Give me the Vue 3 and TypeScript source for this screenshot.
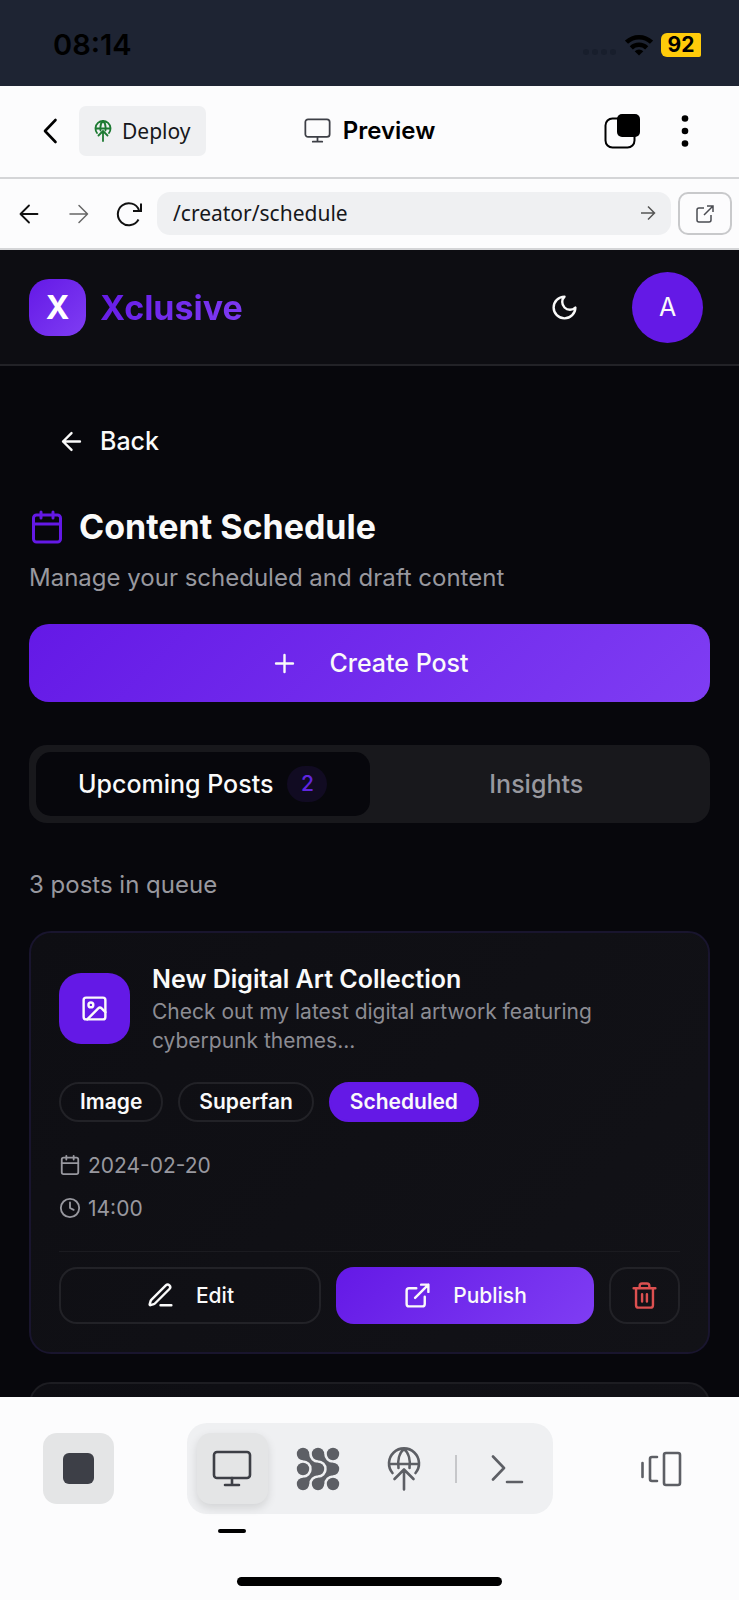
<script setup lang="ts">
import { ref } from 'vue'

interface Post {
  title: string
  description: string
  tags: string[]
  status: string
  date: string
  time: string
}

const path = ref('/creator/schedule')
const activeTab = ref<'upcoming' | 'insights'>('upcoming')
const post: Post = {
  title: 'New Digital Art Collection',
  description: 'Check out my latest digital artwork featuring cyberpunk themes...',
  tags: ['Image', 'Superfan'],
  status: 'Scheduled',
  date: '2024-02-20',
  time: '14:00',
}
</script>

<template>
  <div class="screen">
    <div class="status">
      <span class="clock">08:14</span>
      <div class="indicators">
        <svg class="signal" width="34" height="8" viewBox="0 0 34 8"><circle cx="3" cy="4" r="3" /><circle cx="12" cy="4" r="3" /><circle cx="21" cy="4" r="3" /><circle cx="30" cy="4" r="3" /></svg>
        <svg width="28" height="22" viewBox="0 0 28 22" fill="none" stroke="#000" stroke-width="4.500"><path d="M1.500 8.200a18 18 0 0 1 25 0" /><path d="M6.300 13.800a11.200 11.200 0 0 1 15.400 0" /><path d="M14 21.600l-4.300-4.400a6.300 6.300 0 0 1 8.600 0z" fill="#000" stroke="none" /></svg>
        <span class="battery">92</span>
      </div>
    </div>

    <header class="topbar">
      <div class="top-left">
        <button class="plain chevron" aria-label="Go back">
          <svg width="16" height="26" viewBox="0 0 16 26" fill="none" stroke="#000" stroke-width="2.600" stroke-linecap="round" stroke-linejoin="round"><path d="M13.500 2L3 13l10.500 11" /></svg>
        </button>
        <button class="deploy">
          <svg width="18" height="22" viewBox="0 0 34 44" fill="none" stroke="#1d7a32" stroke-width="3.600" stroke-linecap="round" stroke-linejoin="round"><path d="M5 26A15 15 0 1 1 29 26M2 17h30M17 2c-5 4-6 11-5 19M17 2c5 4 6 11 5 19M17 42V23M8 31l9-9 9 9" /></svg>
          Deploy
        </button>
      </div>
      <div class="top-title">
        <svg width="27" height="25" viewBox="0 0 40 37" fill="none" stroke="#3d3f46" stroke-width="2.600" stroke-linecap="round" stroke-linejoin="round"><rect x="2" y="2" width="36" height="26" rx="4" /><path d="M20 28v7M13 35h14" /></svg>
        Preview
      </div>
      <div class="top-right">
        <button class="plain" aria-label="Windows">
          <svg width="36" height="36" viewBox="0 0 36 36"><rect x="1.500" y="5.500" width="29" height="29" rx="7" fill="none" stroke="#000" stroke-width="2" /><rect x="13" y="1" width="23" height="23" rx="5" /></svg>
        </button>
        <button class="plain dots" aria-label="More">
          <svg width="8" height="34" viewBox="0 0 8 34"><circle cx="4" cy="4.500" r="3.300" /><circle cx="4" cy="17" r="3.300" /><circle cx="4" cy="29.500" r="3.300" /></svg>
        </button>
      </div>
    </header>

    <div class="address">
      <button class="plain nav" aria-label="Previous page">
        <svg width="20" height="20" viewBox="0 0 20 20" fill="none" stroke="#111" stroke-width="1.800" stroke-linecap="round" stroke-linejoin="round"><path d="M18.500 10H1.500M10 1.500L1.500 10l8.500 8.500" /></svg>
      </button>
      <button class="plain nav" aria-label="Next page">
        <svg width="20" height="20" viewBox="0 0 20 20" fill="none" stroke="#666" stroke-width="1.500" stroke-linecap="round" stroke-linejoin="round"><path d="M1 10h17.500M10 1.500l8.500 8.500-8.500 8.500" /></svg>
      </button>
      <button class="plain nav" aria-label="Reload">
        <svg width="28" height="26" viewBox="0 0 28 26" fill="none" stroke="#111" stroke-width="2"><path d="M23.500 18.500A11 11 0 1 1 24 9M26 2.500V10h-8" /></svg>
      </button>
      <div class="url">
        <input v-model="path" type="text" aria-label="Page path" />
        <button class="plain" aria-label="Go">
          <svg width="16" height="16" viewBox="0 0 16 16" fill="none" stroke="#555" stroke-width="1.500"><path d="M1 8h13M8 1.500L14.500 8 8 14.500" /></svg>
        </button>
      </div>
      <button class="external" aria-label="Open in new tab">
        <svg width="20" height="20" viewBox="0 0 20 20" fill="none" stroke="#4a4c52" stroke-width="1.500"><path d="M9 4H4Q2 4 2 6v10q0 2 2 2h10q2 0 2-2v-5M12 2h6v6M18 2L9 11" /></svg>
      </button>
    </div>

    <main class="app">
      <div class="app-header">
        <span class="logo">X</span>
        <span class="brand">Xclusive</span>
        <button class="plain moon" aria-label="Toggle theme">
          <svg class="icon" viewBox="0 0 24 24"><path d="M12 3a6 6 0 0 0 9 9 9 9 0 1 1-9-9Z" /></svg>
        </button>
        <button class="avatar" aria-label="Account">A</button>
      </div>

      <div class="content">
        <a href="#" class="back">
          <svg class="icon" viewBox="0 0 24 24"><path d="M12 19l-7-7 7-7M19 12H5" /></svg>
          Back
        </a>

        <h1>
          <svg class="icon icon-lg" viewBox="0 0 24 24"><rect x="3" y="4" width="18" height="18" rx="2" /><path d="M8 2v4M16 2v4M3 10h18" /></svg>
          Content Schedule
        </h1>
        <p class="subtitle">Manage your scheduled and draft content</p>

        <button class="create">
          <svg class="icon" viewBox="0 0 24 24"><path d="M5 12h14M12 5v14" /></svg>
          Create Post
        </button>

        <div class="tabs" role="tablist">
          <button role="tab" class="tab" :class="{ active: activeTab === 'upcoming' }" :aria-selected="activeTab === 'upcoming'" @click="activeTab = 'upcoming'">
            Upcoming Posts <span class="count">2</span>
          </button>
          <button role="tab" class="tab" :class="{ active: activeTab === 'insights' }" :aria-selected="activeTab === 'insights'" @click="activeTab = 'insights'">
            Insights
          </button>
        </div>

        <p class="queue">3 posts in queue</p>

        <article class="card">
          <div class="card-head">
            <span class="thumb">
              <svg class="icon" viewBox="0 0 24 24"><rect x="3" y="3" width="18" height="18" rx="2" /><circle cx="9" cy="9" r="2" /><path d="M21 15l-3.086-3.086a2 2 0 0 0-2.828 0L6 21" /></svg>
            </span>
            <div class="card-text">
              <h2>{{ post.title }}</h2>
              <p>{{ post.description }}</p>
            </div>
          </div>
          <div class="chips">
            <span v-for="tag in post.tags" :key="tag" class="chip">{{ tag }}</span>
            <span class="chip solid">{{ post.status }}</span>
          </div>
          <div class="meta">
            <svg class="icon icon-sm" viewBox="0 0 24 24"><rect x="3" y="4" width="18" height="18" rx="2" /><path d="M8 2v4M16 2v4M3 10h18" /></svg>
            {{ post.date }}
          </div>
          <div class="meta">
            <svg class="icon icon-sm" viewBox="0 0 24 24"><circle cx="12" cy="12" r="10" /><path d="M12 6v6l4 2" /></svg>
            {{ post.time }}
          </div>
          <div class="actions">
            <button class="edit">
              <svg class="icon" viewBox="0 0 24 24"><path d="M12 20h9M16.376 3.622a1 1 0 0 1 3.002 3.002L7.368 18.635a2 2 0 0 1-.855.506l-2.872.838a.5.5 0 0 1-.62-.62l.838-2.872a2 2 0 0 1 .506-.854z" /></svg>
              Edit
            </button>
            <button class="publish">
              <svg class="icon" viewBox="0 0 24 24"><path d="M15 3h6v6M10 14L21 3M18 13v6a2 2 0 0 1-2 2H5a2 2 0 0 1-2-2V8a2 2 0 0 1 2-2h6" /></svg>
              Publish
            </button>
            <button class="delete" aria-label="Delete">
              <svg class="icon" viewBox="0 0 24 24"><path d="M3 6h18M19 6v14a2 2 0 0 1-2 2H7a2 2 0 0 1-2-2V6M8 6V4a2 2 0 0 1 2-2h4a2 2 0 0 1 2 2v2M10 11v6M14 11v6" /></svg>
            </button>
          </div>
        </article>

        <article class="card next"></article>
      </div>
    </main>

    <footer class="dock">
      <div class="dock-row">
        <button class="tool stop" aria-label="Stop"><span class="square"></span></button>
        <nav class="group" aria-label="Tools">
          <button class="tool active" aria-label="Preview">
            <svg width="40" height="37" viewBox="0 0 40 37" fill="none" stroke="#3d3f46" stroke-width="2.600" stroke-linecap="round" stroke-linejoin="round"><rect x="2" y="2" width="36" height="26" rx="3" /><path d="M20 28v6M13 35h14" /></svg>
          </button>
          <button class="tool" aria-label="Agent">
            <svg width="44" height="44" viewBox="-7 -7 44 44" fill="#5d5f65">
              <g v-for="y in [0, 15, 30]" :key="y"><circle v-for="x in [0, 15, 30]" :key="x" :cx="x" :cy="y" r="6.200" /></g>
              <path d="M0 6.200A8.800 8.800 0 0 1 8.800 15H15V8.800A8.800 8.800 0 0 1 6.200 0H0zM15 6.200A8.800 8.800 0 0 1 23.800 15H30V8.800A8.800 8.800 0 0 1 21.200 0H15zM0 23.800A8.800 8.800 0 0 0 8.800 15H15V21.200A8.800 8.800 0 0 0 6.200 30H0zM15 23.800A8.800 8.800 0 0 0 23.800 15H30V21.200A8.800 8.800 0 0 0 21.200 30H15z" />
            </svg>
          </button>
          <button class="tool" aria-label="Deployments">
            <svg width="34" height="44" viewBox="0 0 34 44" fill="none" stroke="#5d5f65" stroke-width="2.600" stroke-linecap="round" stroke-linejoin="round"><path d="M5.500 26A15 15 0 1 1 28.500 26M2 17h30M17 2c-5 4-6.500 12-5.500 19M17 2c5 4 6.500 12 5.500 19M17 42.500V23M7.500 32l9.500-9.500 9.500 9.500" /></svg>
          </button>
          <span class="divider"></span>
          <button class="tool" aria-label="Shell">
            <svg width="34" height="30" viewBox="0 0 34 30" fill="none" stroke="#5d5f65" stroke-width="2.600" stroke-linecap="round" stroke-linejoin="round"><path d="M3 2.500L14 14 3 25.500M17 28h15" /></svg>
          </button>
        </nav>
        <button class="tool" aria-label="Switch panes">
          <svg width="42" height="36" viewBox="0 0 42 36" fill="none" stroke="#5d5f65" stroke-width="2.600" stroke-linecap="round" stroke-linejoin="round"><rect x="24" y="2" width="16" height="32" rx="2" /><path d="M17 6h-5q-2 0-2 2v20q0 2 2 2h5M2.500 12v14" /></svg>
        </button>
      </div>
      <div class="home"></div>
    </footer>
  </div>
</template>

<style>
body {
  margin: 0;
}
</style>

<style scoped>
* {
  box-sizing: border-box;
}
.screen {
  height: 100vh;
  display: flex;
  flex-direction: column;
  overflow: hidden;
  background: #fcfcfd;
  font-family: Inter, "Liberation Sans", sans-serif;
}
button {
  font: inherit;
  color: inherit;
  border: 0;
  padding: 0;
  background: none;
  display: flex;
  align-items: center;
  justify-content: center;
  white-space: nowrap;
}
svg {
  display: block;
  flex: none;
}
h1,
h2,
p {
  margin: 0;
}
.status {
  flex: none;
  height: 86px;
  padding: 3px 38px 0 53px;
  background: #1e2433;
  display: flex;
  align-items: center;
  justify-content: space-between;
}
.clock {
  font-size: 29px;
  font-weight: 600;
}
.indicators {
  display: flex;
  align-items: center;
  gap: 8px;
}
.signal {
  fill: #181e2c;
  margin-top: 14px;
}
.battery {
  width: 40px;
  height: 24px;
  border-radius: 6px 2px 2px 6px;
  background: #ffcb0a;
  font-size: 21px;
  line-height: 24px;
  font-weight: 700;
  text-align: center;
}
.topbar {
  flex: none;
  height: 93px;
  border-bottom: 2px solid #d4d5d7;
  padding: 0 36px 2px;
  display: grid;
  grid-template-columns: 1fr auto 1fr;
  align-items: center;
}
.top-left {
  display: flex;
  align-items: center;
  gap: 15px;
}
.chevron {
  width: 28px;
  height: 50px;
}
.deploy {
  height: 50px;
  padding: 0 15px;
  border-radius: 7px;
  background: #eff0f2;
  gap: 10px;
  font-family: "Noto Sans", sans-serif;
  font-size: 21px;
  color: #16171b;
}
.top-title {
  display: flex;
  align-items: center;
  gap: 12px;
  font-size: 24px;
  font-weight: 600;
}
.top-right {
  padding-right: 8px;
  display: flex;
  justify-content: flex-end;
  align-items: center;
  gap: 35px;
}
.dots {
  width: 20px;
}
.address {
  flex: none;
  height: 71px;
  padding: 0 7px 0 4px;
  border-bottom: 2px solid #d4d5d7;
  display: flex;
  align-items: center;
}
.nav {
  width: 50px;
  height: 44px;
}
.url {
  flex: 1;
  height: 43px;
  margin: 0 7px 0 3px;
  padding: 0 15px 2px 16px;
  border-radius: 13px;
  background: #eff0f2;
  display: flex;
  align-items: center;
}
.url input {
  flex: 1;
  min-width: 0;
  padding: 0;
  border: 0;
  outline: 0;
  background: none;
  font-family: "Noto Sans", sans-serif;
  font-size: 21px;
  color: #16171b;
}
.external {
  width: 54px;
  height: 43px;
  border: 2px solid #c8c9cb;
  border-radius: 10px;
}
.app {
  flex: 1;
  min-height: 0;
  overflow: hidden;
  background: #07070c;
  color: #fafafa;
}
.icon {
  width: 29px;
  height: 29px;
  fill: none;
  stroke: currentColor;
  stroke-width: 2;
  stroke-linecap: round;
  stroke-linejoin: round;
}
.icon-lg {
  width: 36px;
  height: 36px;
  color: #6419e6;
}
.icon-sm {
  width: 22px;
  height: 22px;
}
.app-header {
  height: 116px;
  padding: 0 36px 0 29px;
  border-bottom: 2px solid #222227;
  background: #0d0d12;
  display: flex;
  align-items: center;
}
.logo {
  width: 57px;
  height: 57px;
  border-radius: 20px;
  background: linear-gradient(135deg, #6419e6, #7f3df3);
  color: #fff;
  font-size: 32px;
  font-weight: 700;
  line-height: 57px;
  text-align: center;
}
.brand {
  margin-left: 14px;
  font-size: 34px;
  font-weight: 700;
  background: linear-gradient(135deg, #6419e6, #7f3df3);
  background-clip: text;
  color: transparent;
}
.moon {
  width: 70px;
  height: 70px;
  margin: 0 33px 0 auto;
}
.avatar {
  width: 71px;
  height: 71px;
  border-radius: 50%;
  background: #6419e6;
  font-size: 25px;
}
.content {
  padding: 40px 29px 0;
}
.back {
  width: fit-content;
  height: 70px;
  padding: 0 28px;
  display: flex;
  align-items: center;
  gap: 14px;
  font-size: 25px;
  font-weight: 500;
  color: inherit;
  text-decoration: none;
}
h1 {
  margin-top: 29px;
  display: flex;
  align-items: center;
  gap: 14px;
  font-size: 34px;
  line-height: 44px;
  font-weight: 700;
}
.subtitle,
.queue {
  font-size: 24px;
  line-height: 36px;
  color: #98989f;
}
.subtitle {
  margin-top: 11px;
}
.create {
  width: 100%;
  height: 78px;
  margin-top: 28px;
  border-radius: 20px;
  gap: 30px;
  background: linear-gradient(135deg, #6419e6, #7f3df3);
  font-size: 25px;
  font-weight: 500;
}
.tabs {
  height: 78px;
  margin-top: 43px;
  padding: 7px;
  border-radius: 18px;
  background: #18181c;
  display: grid;
  grid-template-columns: 1fr 1fr;
}
.tab {
  border-radius: 15px;
  gap: 14px;
  font-size: 25px;
  font-weight: 500;
  color: #98989f;
}
.tab.active {
  background: #07070c;
  color: #fafafa;
}
.count {
  width: 40px;
  height: 36px;
  border-radius: 18px;
  background: #110b22;
  color: #6026e0;
  font-size: 21px;
  line-height: 36px;
}
.queue {
  margin-top: 44px;
}
.card {
  margin-top: 28px;
  padding: 28px;
  border: 2px solid #19152e;
  border-radius: 22px;
  background: linear-gradient(135deg, #0e0e13, #121217);
}
.card-head {
  display: flex;
  align-items: center;
  gap: 22px;
}
.thumb {
  flex: none;
  width: 71px;
  height: 71px;
  border-radius: 22px;
  background: #6419e6;
  display: flex;
  align-items: center;
  justify-content: center;
}
.card-text {
  flex: 1;
}
h2 {
  font-size: 25px;
  line-height: 36px;
  font-weight: 600;
}
.card-text p {
  font-size: 21px;
  line-height: 29px;
  color: #8c8c93;
}
.chips {
  margin-top: 27px;
  display: flex;
  gap: 15px;
}
.chip {
  height: 40px;
  padding: 0 19px;
  border: 2px solid #222227;
  border-radius: 20px;
  font-size: 21px;
  line-height: 36px;
  font-weight: 600;
}
.chip.solid {
  background: #6419e6;
  border-color: #6419e6;
}
.meta {
  margin-top: 13px;
  height: 30px;
  display: flex;
  align-items: center;
  gap: 7px;
  font-size: 21px;
  color: #98989f;
}
.chips + .meta {
  margin-top: 28px;
}
.actions {
  margin-top: 28px;
  padding-top: 15px;
  border-top: 1px solid #1b1b20;
  display: flex;
  gap: 15px;
  font-size: 21px;
  font-weight: 500;
}
.actions button {
  height: 57px;
  border-radius: 18px;
  gap: 21px;
}
.actions .edit,
.actions .publish {
  flex: 1;
}
.actions .edit,
.actions .delete {
  border: 2px solid #222227;
}
.publish {
  background: linear-gradient(135deg, #6419e6, #7f3df3);
}
.delete {
  width: 71px;
  color: #dc5050;
}
.next {
  height: 120px;
  border-color: #1d1d22;
}
.dock {
  flex: none;
  padding: 26px 43px 14px;
}
.dock-row {
  display: flex;
  align-items: center;
  justify-content: space-between;
}
.tool {
  position: relative;
  width: 71px;
  height: 71px;
  border-radius: 14px;
}
.stop,
.tool.active {
  background: #e4e5e6;
}
.square {
  width: 31px;
  height: 31px;
  border-radius: 6px;
  background: #3d3f47;
}
.group {
  padding: 10px;
  border-radius: 20px;
  background: #eff0f2;
  display: flex;
  align-items: center;
  gap: 15px;
}
.tool.active {
  box-shadow: 0 4px 10px rgba(0, 0, 0, 0.12);
}
.tool.active::after {
  content: "";
  position: absolute;
  left: 21px;
  bottom: -29px;
  width: 28px;
  height: 4px;
  border-radius: 2px;
  background: #000;
}
.divider {
  width: 2px;
  height: 28px;
  background: #c6c7ca;
}
.home {
  width: 265px;
  height: 9px;
  margin: 63px auto 0;
  border-radius: 5px;
  background: #000;
}
</style>
